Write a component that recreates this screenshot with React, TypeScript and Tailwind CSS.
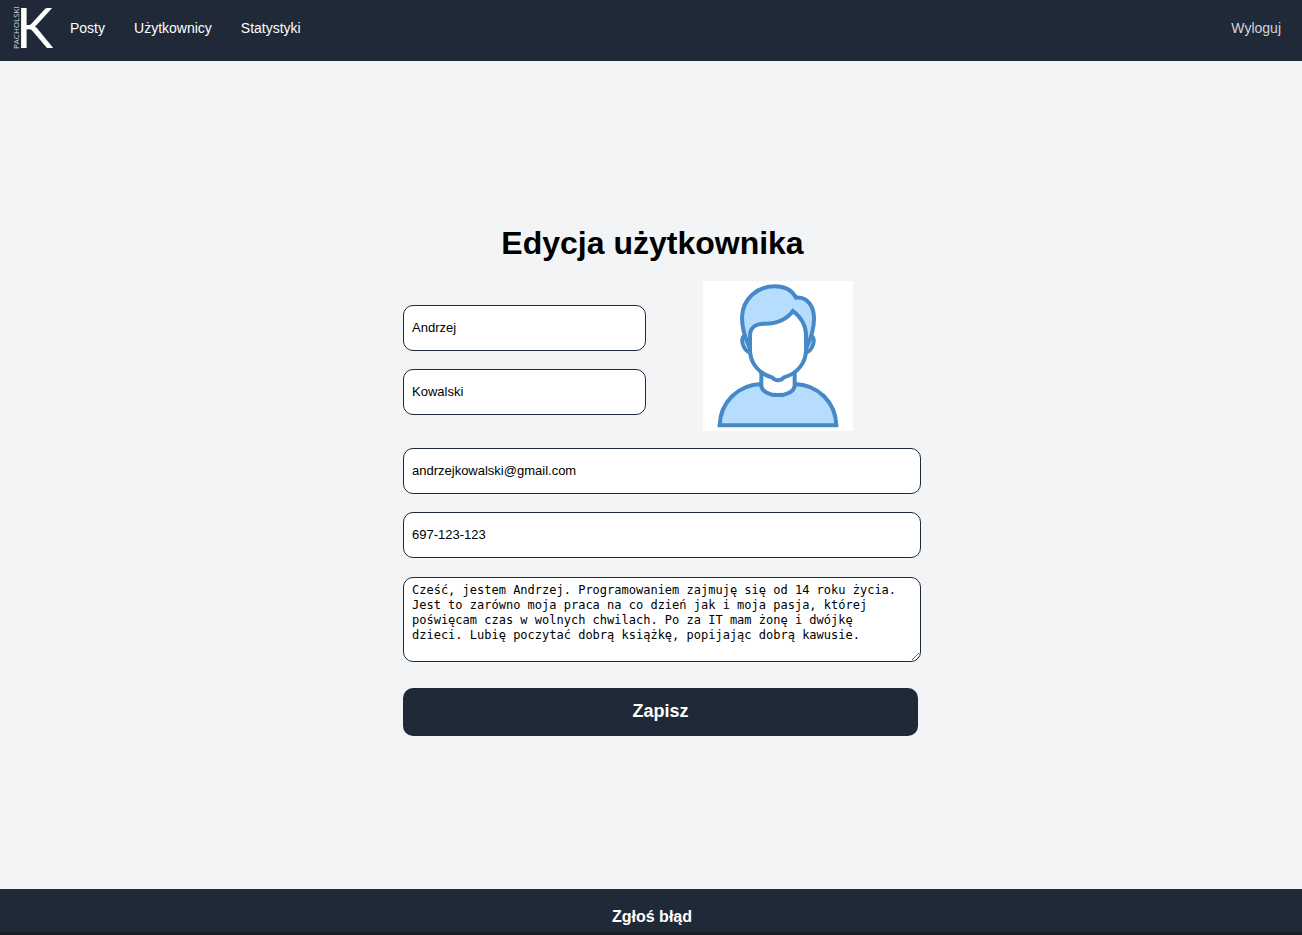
import React from "react";

const field =
  "block h-[46px] w-full rounded-[10px] border border-gray-800 bg-white px-2 pb-[2px] text-[13px] text-black outline-none";

const bio =
  "Cześć, jestem Andrzej. Programowaniem zajmuję się od 14 roku życia. Jest to zarówno moja praca na co dzień jak i moja pasja, której poświęcam czas w wolnych chwilach. Po za IT mam żonę i dwójkę dzieci. Lubię poczytać dobrą książkę, popijając dobrą kawusie.";

function Logo() {
  return (
    <svg viewBox="0 0 41 40" className="h-10 w-[41px] overflow-visible" role="img" aria-label="Pacholski">
      <text
        x="3"
        y="40"
        fill="#fff"
        className="font-['Lato',sans-serif] text-[56px]"
      >
        K
      </text>
      <text
        transform="translate(6 41) rotate(-90)"
        fill="#d1d5db"
        className="font-['Open_Sans',sans-serif] text-[8px]"
      >
        PACHOLSKI
      </text>
    </svg>
  );
}

function Avatar() {
  return (
    <svg
      viewBox="9 9 450 450"
      className="h-[150px] w-[150px] shrink-0 bg-white"
      fill="none"
      stroke="#4788c7"
      strokeWidth="12"
      role="img"
      aria-label="Avatar"
    >
      <path
        fill="#b6dcfe"
        d="M59 442C61 373 114 320 184 318C184 361 284 361 284 318C354 320 407 373 409 442Z"
      />
      <path fill="#fff" d="M184 284V322C187 361 281 361 284 322V284" />
      <path fill="#dff0fe" d="M135 172C119 182 129 216 150 224M333 172C349 182 339 216 318 224" />
      <path
        fill="#b6dcfe"
        d="M147 205C133 175 126 150 126 118C128 60 174 25 225 25C253 25 276 37 288 59C325 56 342 88 342 122C342 150 335 175 321 205Z"
      />
      <path
        fill="#fff"
        d="M150 215V172C151 144 170 137 196 137C236 137 260 124 279 99C305 119 318 143 318 172V215C318 255 292 287 252 298C242 310 226 310 216 298C176 287 150 255 150 215Z"
      />
    </svg>
  );
}

export default function App() {
  return (
    <div className="flex min-h-screen flex-col bg-gray-100 font-['Liberation_Sans',Arial,sans-serif] text-black">
      <header className="flex items-center bg-[#202937] pt-2 pr-[21px] pb-[13px] pl-[13px] text-sm text-white">
        <a href="#">
          <Logo />
        </a>
        <nav className="ml-4 flex gap-[29px]">
          <a href="#">Posty</a>
          <a href="#">Użytkownicy</a>
          <a href="#">Statystyki</a>
        </nav>
        <a href="#" className="ml-auto text-gray-300">
          Wyloguj
        </a>
      </header>

      <main className="flex grow flex-col items-center justify-center pt-[9px] pl-[3px]">
        <h1 className="text-[32px] leading-10 font-bold">Edycja użytkownika</h1>
        <div className="flex w-full justify-center pt-[18px] pl-[19px]">
          <form className="w-full max-w-[518px]" onSubmit={(e) => e.preventDefault()}>
            <div className="flex justify-between pr-[68px]">
              <div className="flex w-[243px] flex-col gap-[18px] pt-6">
                <input aria-label="Imię" className={field} defaultValue="Andrzej" />
                <input aria-label="Nazwisko" className={field} defaultValue="Kowalski" />
              </div>
              <Avatar />
            </div>
            <div className="mt-[17px] flex flex-col gap-[18px]">
              <input aria-label="E-mail" type="email" className={field} defaultValue="andrzejkowalski@gmail.com" />
              <input aria-label="Telefon" type="tel" className={field} defaultValue="697-123-123" />
            </div>
            <textarea
              aria-label="Opis"
              className="mt-[19px] block h-[85px] w-full resize rounded-[10px] border border-gray-800 bg-white py-[5px] pr-3 pl-2 font-['DejaVu_Sans_Mono',monospace] text-[12px] leading-[15px] text-black outline-none"
              defaultValue={bio}
            />
            <div className="pt-[26px] pr-[3px]">
              <button
                type="submit"
                className="block h-12 w-full rounded-[10px] bg-[#202937] pb-[3px] text-lg font-bold text-white"
              >
                Zapisz
              </button>
            </div>
          </form>
        </div>
      </main>

      <footer className="border-b-[3px] border-[#1c1d22] bg-[#202937] pt-4 pb-[3px] pl-[2px] text-center font-bold text-white">
        <a href="#">Zgłoś błąd</a>
      </footer>
    </div>
  );
}
